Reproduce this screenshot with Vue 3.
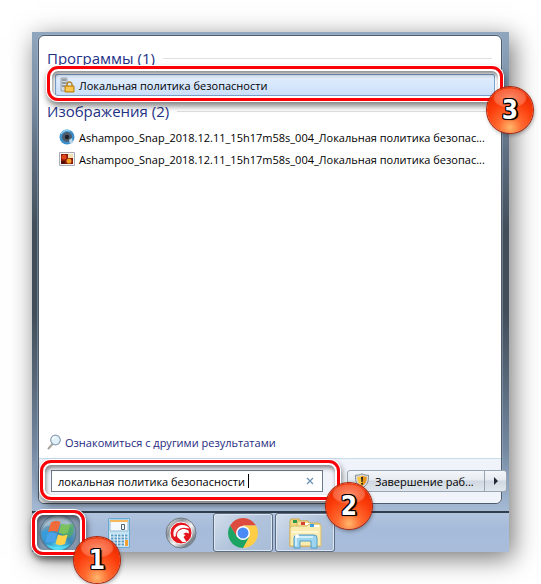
<script setup>
import { ref } from 'vue'

const query = ref('локальная политика безопасности')

const images = [
  { icon: 'lens', name: 'Ashampoo_Snap_2018.12.11_15h17m58s_004_Локальная политика безопас...' },
  { icon: 'photo', name: 'Ashampoo_Snap_2018.12.11_15h17m58s_004_Локальная политика безопас...' },
]
</script>
<template>
  <div class="stage">
    <div class="desktop">
      <main class="menu">
        <section class="results">
          <h2 class="group-title">Программы (1)</h2>
          <div class="marked">
            <a href="#" class="result selected">
              <svg class="icon" viewBox="0 0 16 16">
                <path d="M2 1h6v13H2z" fill="#d5dae0" stroke="#98a1aa" />
                <path d="M3 3h4M3 6h4M3 9h3" stroke="#4f5a64" />
                <path d="M8 9V7.500a2.500 2.500 0 0 1 5 0V9" fill="none" stroke="#b5862d" stroke-width="1.500" />
                <path d="M6 9h9v6H6z" fill="#f3b52c" stroke="#b97d12" />
                <path d="M7 11h7M7 13h7" stroke="#ffd979" />
              </svg>
              <span>Локальная политика безопасности</span>
            </a>
            <span class="outline outline-result"></span>
            <span class="badge badge-result">3</span>
          </div>
          <h2 class="group-title second">Изображения (2)</h2>
          <ul class="files">
            <li v-for="image in images" :key="image.icon">
              <a href="#" class="result file">
                <svg v-if="image.icon === 'lens'" class="icon" viewBox="0 0 16 16">
                  <circle cx="8" cy="8" r="7.500" fill="#3a8fc9" />
                  <path d="M2 5a7 7 0 0 1 9-3" fill="none" stroke="#8fd0f2" stroke-width="1.500" />
                  <circle cx="8" cy="8" r="5" fill="#4d5d6e" />
                  <circle cx="8" cy="8" r="2.200" fill="#1c2129" />
                  <path d="M10 11l3-2 1 5-3 1z" fill="#b9d6e8" />
                </svg>
                <svg v-else class="icon" viewBox="0 0 16 16">
                  <path d="M.5 1.500h15v13H.5z" fill="#f4f4f4" stroke="#a9adb2" />
                  <path d="M2 3h12v10H2z" fill="#8e1a0a" />
                  <circle cx="5" cy="6" r="2.500" fill="#e2471c" />
                  <path d="M9 3h5v4H9z" fill="#f2dfb4" />
                  <circle cx="10" cy="10" r="2.500" fill="#f0a223" />
                  <path d="M2 10h4v3H2z" fill="#531008" />
                </svg>
                <span>{{ image.name }}</span>
              </a>
            </li>
          </ul>
          <a href="#" class="more">
            <svg class="icon" viewBox="0 0 16 16">
              <path d="M5.500 10L1.500 14.500" stroke="#a9a39b" stroke-width="2" stroke-linecap="round" />
              <circle cx="8.500" cy="6" r="4.800" fill="#dff0fb" stroke="#8ba0b3" stroke-width="1.200" />
              <path d="M5.500 5.500a3.200 3.200 0 0 1 3-2.500" fill="none" stroke="#fff" stroke-width="1.500" />
            </svg>
            <span>Ознакомиться с другими результатами</span>
          </a>
        </section>
        <footer class="menu-footer">
          <div class="marked search">
            <input v-model="query" type="text" class="search-input" aria-label="Поиск" />
            <span class="caret"></span>
            <button type="button" class="clear" aria-label="Очистить" @click="query = ''">
              <svg viewBox="0 0 8 8" width="8" height="8">
                <path d="M1 1l6 6M7 1L1 7" stroke="#6b93b8" stroke-width="1.300" />
              </svg>
            </button>
            <span class="outline outline-search"></span>
            <span class="badge badge-search">2</span>
          </div>
          <div class="power">
            <button type="button" class="shutdown">
              <svg class="icon" viewBox="0 0 16 16">
                <path d="M8 .7c2 1.300 4 1.600 6.500 1.500.5 6-1.500 10.500-6.500 13C3 12.700 1 8.200 1.500 2.200 4 2.300 6 2 8 .7z" fill="#d9dde2" stroke="#858b93" />
                <path d="M8 2.500c1.500.9 3 1.200 4.800 1.200C13 8 11.500 11.300 8 13.300z" fill="#e8971a" />
                <path d="M8 2.500c-1.500.9-3 1.200-4.800 1.200C3 8 4.500 11.300 8 13.300z" fill="#fbc944" />
                <path d="M7 4h2l-.4 5H7.400z" fill="#222" />
                <circle cx="8" cy="10.700" r="1" fill="#222" />
              </svg>
              <span>Завершение раб...</span>
            </button>
            <button type="button" class="power-more" aria-label="Другие действия">
              <svg viewBox="0 0 6 8" width="6" height="8"><path d="M1 0l4 4-4 4z" fill="#1f2a36" /></svg>
            </button>
          </div>
        </footer>
      </main>
      <nav class="taskbar">
        <div class="marked">
          <button type="button" class="start" aria-label="Пуск">
            <svg viewBox="0 0 40 40" width="40" height="40">
              <defs>
                <radialGradient id="orb" cx="50%" cy="90%" r="85%">
                  <stop offset="0" stop-color="#4fd6f5" />
                  <stop offset=".45" stop-color="#3a86b4" />
                  <stop offset="1" stop-color="#93a9ba" />
                </radialGradient>
              </defs>
              <circle cx="20" cy="20" r="18" fill="url(#orb)" stroke="#5d7285" />
              <path d="M5 15a16 16 0 0 1 30 0c-8-5-22-5-30 0z" fill="#fff" opacity=".3" />
              <path d="M23 13c4 1 8-2 13-2-1 4 1 8-3 12-3 3-6 2-9 1z" fill="#4fae62" opacity=".75" />
              <path d="M3 19c4-3 8-2 13 1l-2 12c-4-1-7-3-9-6z" fill="#2f9fe4" opacity=".8" />
              <path d="M13 9.500c3-2 6.500-2 9.500-.5L19.500 19c-3-1.500-6.500-1.500-9.500.2z" fill="#f06a3a" />
              <path d="M23.500 10.500c3 1.500 6 1.500 9 0L30 19.800c-3 1.500-6.500 1.500-9.500 0z" fill="#7cc35f" />
              <path d="M9.500 20.800c3-1.700 6.500-1.700 9.500-.2l-2.500 9.400c-3-1.400-6.500-1.400-9.500.3z" fill="#4aa2e8" />
              <path d="M20 21.500c3 1.500 6.500 1.500 9.500 0L27 31c-3 1.500-6.500 1.500-9.500 0z" fill="#ffd24a" />
              <path d="M8 31c7 4 17 4 24 0-6 8-18 8-24 0z" fill="#5df0ff" opacity=".6" />
            </svg>
          </button>
          <span class="outline outline-start"></span>
          <span class="badge badge-start">1</span>
        </div>
        <button type="button" class="task calc" aria-label="Калькулятор">
          <svg viewBox="0 0 24 32" width="24" height="32">
            <path d="M1.500 1.500h21v29h-21z" fill="#c5e3f3" stroke="#6ba9d0" />
            <path d="M3 3h18v11H3z" fill="#f5f9fb" stroke="#8cbad6" />
            <path d="M3 3h18v2H3z" fill="#f3b95c" />
            <path d="M14.500 7.500h3v5h-3z" fill="none" stroke="#53656f" />
            <path d="M3 17h18v12H3z" fill="#e9f5fb" />
            <path d="M4 18.500h17M4 21.500h17M4 24.500h13M4 27.500h13" stroke="#5a9cc8" stroke-width="2" stroke-dasharray="2.500 1" />
            <path d="M18 23h3v6h-3z" fill="#f2a032" />
          </svg>
        </button>
        <button type="button" class="task snap" aria-label="Ashampoo">
          <svg viewBox="0 0 32 32" width="32" height="32">
            <defs>
              <linearGradient id="metal" x1="0" y1="0" x2="1" y2="1">
                <stop offset="0" stop-color="#fff" />
                <stop offset=".3" stop-color="#8b9299" />
                <stop offset=".55" stop-color="#f6f7f8" />
                <stop offset=".8" stop-color="#7b838b" />
                <stop offset="1" stop-color="#dfe3e7" />
              </linearGradient>
            </defs>
            <circle cx="16" cy="16" r="15" fill="url(#metal)" stroke="#6f7a86" />
            <circle cx="16" cy="16" r="11" fill="#e5141d" stroke="#f3f4f5" />
            <path d="M9 20c-2-6 1-11 7-12 4-.5 7 1 8.500 3.500l-4-.5c-6-.5-9 3-9.500 8z" fill="#fff" />
            <path d="M12 18c0-4 3.500-6.500 8-6l3.500 1.500.5 3-3-1-3 1.500 2.500 1-2 2 3 5h-4l-3-3c-1.500-1-2.500-2-2.500-4z" fill="#fff" />
            <path d="M11 18.500c.5-5 4-7.500 9-7.200" fill="none" stroke="#e5141d" stroke-width=".7" />
          </svg>
        </button>
        <button type="button" class="task open" aria-label="Chrome">
          <svg viewBox="0 0 32 32" width="32" height="32">
            <path d="M3.010 8.500A15 15 0 0 1 28.990 8.500H16l-6.500 11z" fill="#dd4b3e" />
            <path d="M28.990 8.500A15 15 0 0 1 16 31l6-11.500L16 8.500z" fill="#ffcd46" />
            <path d="M3.010 8.500A15 15 0 0 0 16 31l6.200-11.200L16 22.500 9.800 19.500z" fill="#1da362" />
            <circle cx="16" cy="16" r="7" fill="#fff" />
            <circle cx="16" cy="16" r="5.500" fill="#4a8af4" />
          </svg>
        </button>
        <button type="button" class="task open" aria-label="Проводник">
          <svg viewBox="0 0 34 32" width="34" height="32">
            <path d="M2 29V4l1-2h8l1 2h8v25z" fill="#f2d883" stroke="#c9a64c" />
            <path d="M5 3h4v3H5z" fill="#2b9a4f" />
            <path d="M9 29V6l1-2h10l1 2h10v23z" fill="#f6e29a" stroke="#d0b05a" />
            <path d="M13 5h4v3h-4z" fill="#d84433" />
            <path d="M17 6h5v2h-5z" fill="#fff" />
            <path d="M2 29V11l2-2h15l2-2h11l1 2v20z" fill="#fbedb2" stroke="#d6b966" />
            <path d="M26 8h5v2h-5z" fill="#fff" />
            <path d="M22 7h4v3h-4z" fill="#3ba0df" />
            <path d="M4 15h26" stroke="#fff6d2" stroke-width="2" />
            <path d="M6 31V21q0-3 3-3h17q3 0 3 3v10h-6v-7H12v7z" fill="#9dd5ef" stroke="#4e9cc6" />
            <path d="M8 29v-8q0-1 2-1h15" fill="none" stroke="#e2f6ff" stroke-width="1.500" />
            <circle cx="9" cy="19" r="2" fill="#fff" />
          </svg>
        </button>
      </nav>
    </div>
  </div>
</template>
<style>
body {
  margin: 0;
  background: #fff;
}
</style>
<style scoped>
.stage {
  display: flex;
  box-sizing: border-box;
  min-height: 100vh;
  padding: 32px;
  overflow: hidden;
  font-family: 'Open Sans', 'Noto Sans', sans-serif;
  font-size: 11px;
  color: #000;
}
.desktop {
  display: flex;
  flex: 1;
  flex-direction: column;
  min-width: 0;
  background: linear-gradient(#8fa6be 0, #7c90a6 12%, #5f6f82 23%, #424e5a 38%, #424e5a 54%, #5a6a7c 68%, #7388a0 80%, #a5bad5 92%, #a8bddb 100%);
  box-shadow: 4px 6px 24px rgba(0, 0, 0, 0.55);
}
.menu {
  display: flex;
  flex: 1;
  flex-direction: column;
  margin: 3px 7px 7px 6px;
  background: #fff;
  border: 1px solid #4d5d6f;
  border-radius: 6px;
  box-shadow: 0 0 0 1px #a9bccf66;
}
.results {
  display: flex;
  flex: 1;
  flex-direction: column;
  padding: 11px 6px 5px 8px;
}
.group-title {
  display: flex;
  align-items: center;
  gap: 8px;
  margin: 0;
  font-size: 15px;
  font-weight: 400;
  line-height: 22px;
  color: #1e3287;
}
.group-title::after {
  content: '';
  flex: 1;
  height: 1px;
  margin-right: 3px;
  background: #dfdfdf;
}
.second {
  margin-top: 4px;
}
.marked {
  position: relative;
}
.result {
  display: flex;
  align-items: center;
  gap: 4px;
  box-sizing: border-box;
  height: 22px;
  color: #000;
  white-space: nowrap;
  text-decoration: none;
}
.selected {
  margin: 5px 0 0 8px;
  padding-left: 3px;
  background: linear-gradient(#e3eefd, #cbe0fb);
  border: 1px solid #7da2ce;
  border-radius: 2px;
}
.icon {
  flex: none;
  width: 16px;
  height: 16px;
}
.files {
  margin: 4px 0 0;
  padding: 0 0 0 12px;
  list-style: none;
}
.more {
  display: flex;
  align-items: center;
  gap: 2px;
  height: 22px;
  margin-top: auto;
  color: #1e2a80;
  text-decoration: none;
}
.menu-footer {
  display: flex;
  align-items: center;
  gap: 24px;
  height: 44px;
  padding-left: 12px;
  background: #f0f4fa;
  border-top: 1px solid #c8dcec;
  border-radius: 0 0 6px 6px;
}
.search {
  display: flex;
  flex: 1;
  box-sizing: border-box;
  height: 22px;
  background: #fff;
  border: 1px solid #6e7886;
}
.search-input {
  flex: 1;
  min-width: 0;
  padding: 0 0 0 6px;
  font: inherit;
  color: #000;
  background: none;
  border: 0;
  outline: 0;
}
.caret {
  position: absolute;
  top: 3px;
  left: 196px;
  width: 1px;
  height: 14px;
  background: #000;
}
.clear {
  display: flex;
  align-items: center;
  justify-content: center;
  width: 24px;
  padding: 0;
  background: none;
  border: 0;
}
.power {
  display: flex;
  box-sizing: border-box;
  width: 160px;
  height: 22px;
  margin-right: -6px;
  background: linear-gradient(#f3f6fa, #e6ebf1 45%, #d0d7e0 50%, #dfe6ee);
  border: 1px solid #9aa5b2;
  border-radius: 3px;
}
.shutdown {
  display: flex;
  flex: 1;
  align-items: center;
  gap: 5px;
  min-width: 0;
  padding: 0 0 0 6px;
  font: inherit;
  color: #000;
  white-space: nowrap;
  background: none;
  border: 0;
}
.power-more {
  display: flex;
  align-items: center;
  justify-content: center;
  width: 22px;
  padding: 0;
  background: none;
  border: 0;
  border-left: 1px solid #9aa5b2;
}
.taskbar {
  display: flex;
  height: 39px;
  background: linear-gradient(#b2c5df, #a6bbda 40%, #a9bddb);
  border-top: 2px solid #333e4c;
}
.start {
  display: flex;
  align-items: center;
  justify-content: center;
  width: 52px;
  height: 39px;
  padding: 0;
  background: #8496ad;
  border: 0;
}
.task {
  display: flex;
  align-items: center;
  justify-content: center;
  box-sizing: border-box;
  width: 60px;
  padding: 0;
  background: none;
  border: 0;
}
.calc {
  margin-left: 5px;
}
.snap {
  width: 64px;
}
.open {
  margin-right: 2px;
  background: linear-gradient(135deg, #d3deec, #b2c4dc 50%, #a9bdd8);
  border: 1px solid #5b6b80;
  border-radius: 3px;
  box-shadow: inset 0 0 0 1px #dde7f3;
}
.outline {
  position: absolute;
  z-index: 1;
  border: 3px solid #fb0007;
  border-radius: 11px;
  box-shadow: 0 0 0 1px #fff, inset 0 0 0 2px #fff, inset 1px 3px 4px 2px rgba(0, 0, 0, 0.45), 1px 4px 6px 1px rgba(0, 0, 0, 0.5);
  pointer-events: none;
}
.outline-result {
  inset: -3px -8px -5px 0;
}
.outline-search {
  inset: -11px -18px -9px -12px;
}
.outline-start {
  inset: -3px -1px -3px 0;
}
.badge {
  position: absolute;
  z-index: 2;
  width: 46px;
  height: 46px;
  font-family: 'DejaVu Sans Condensed', 'DejaVu Sans', sans-serif;
  font-size: 26px;
  font-weight: 700;
  line-height: 46px;
  color: #fff;
  text-align: center;
  text-shadow:
    1px 0 #000, -1px 0 #000, 0 1px #000, 0 -1px #000,
    1px 1px #000, -1px 1px #000, 1px -1px #000, -1px -1px #000,
    2px 1px 1px #000;
  background:
    radial-gradient(ellipse 17px 10px at 50% 24%, rgba(255, 170, 140, 0.75) 0, rgba(255, 130, 95, 0.6) 90%, transparent 100%),
    radial-gradient(circle at 50% 88%, #ffb76b 0, #ff6a30 25%, #fb3c0a 55%, #ec2c00 75%, #f04a22 100%);
  border-radius: 50%;
  box-shadow: 0 0 0 1px #b3260a, 1px 2px 4px rgba(0, 0, 0, 0.4);
}
.badge-result {
  top: 18px;
  right: -38px;
}
.badge-search {
  top: 12px;
  right: -50px;
}
.badge-start {
  top: 24px;
  left: 42px;
}
</style>
